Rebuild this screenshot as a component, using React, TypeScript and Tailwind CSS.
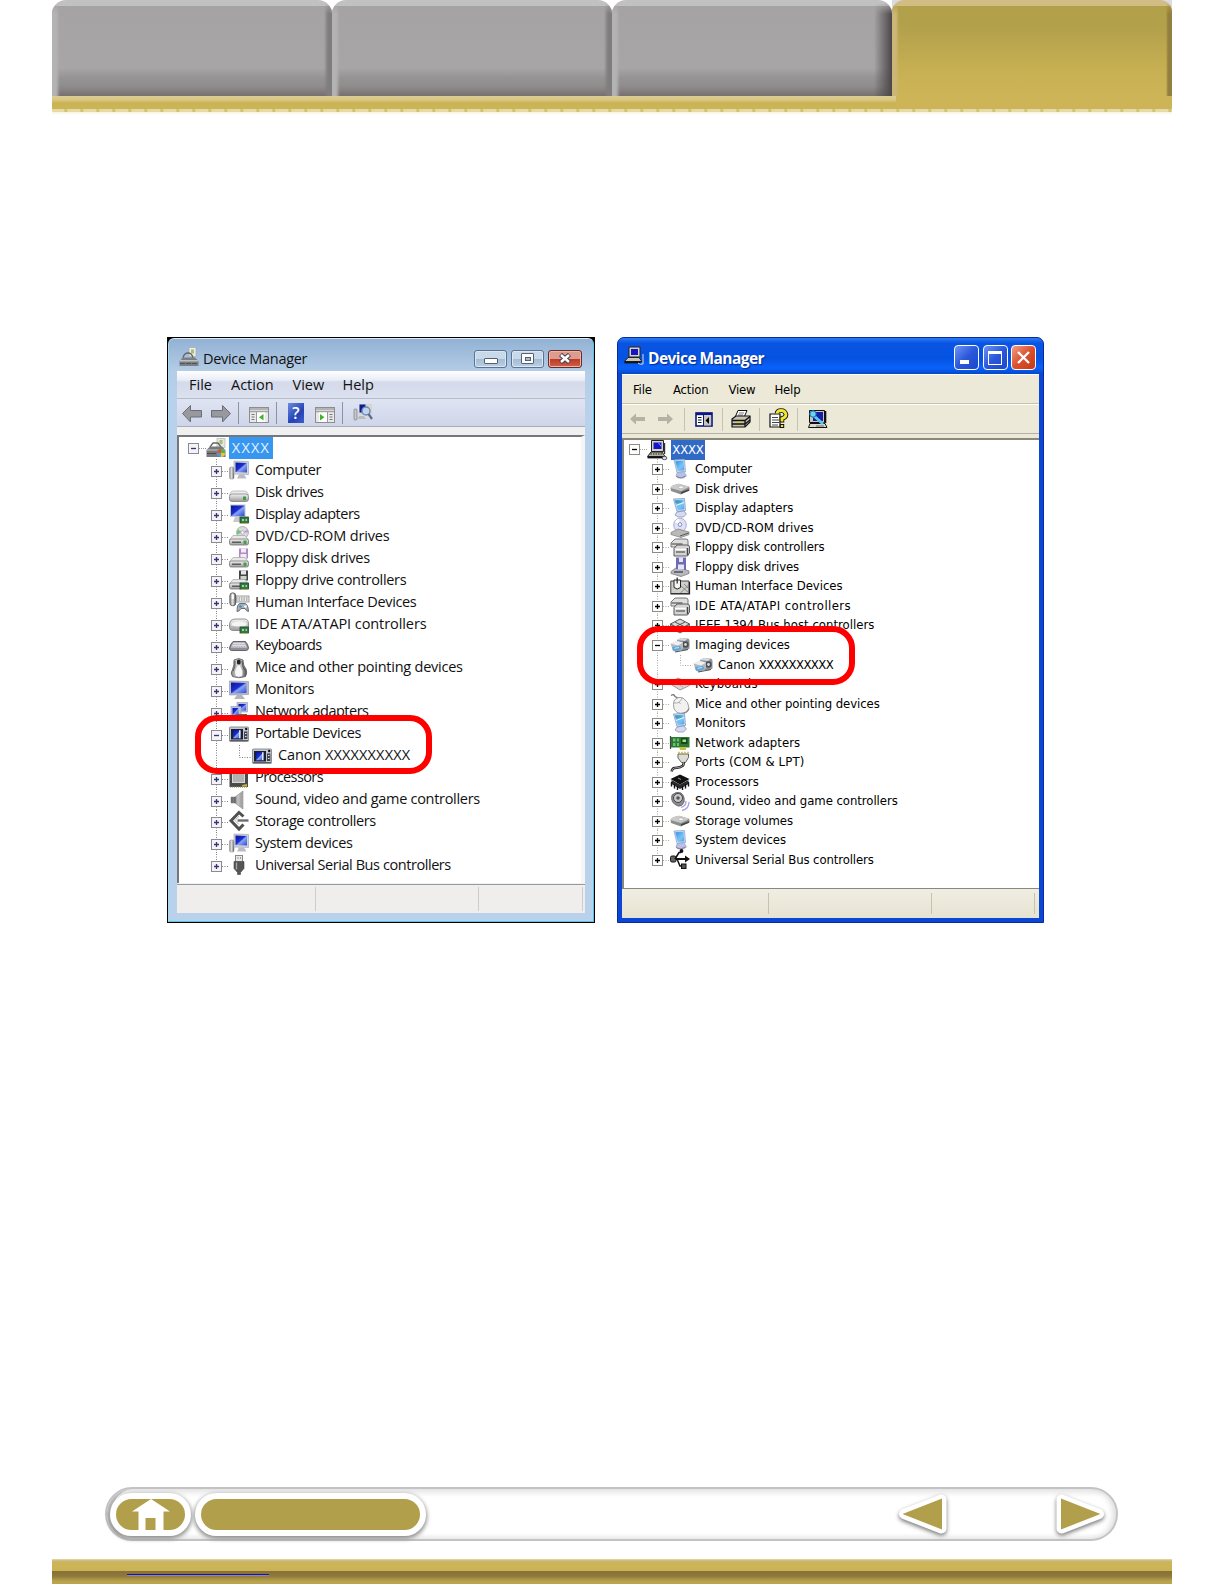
import React from "react";

type Row = { label: string; icon: React.ReactNode; track?: string; open?: boolean; child?: boolean };

const Icon = ({ children, size = 20 }: { children: React.ReactNode; size?: number }) => (
  <svg width={size} height={size} viewBox="0 0 20 20" className="shrink-0 overflow-visible">
    {children}
  </svg>
);

/* ---------- shared gradients ---------- */

const Defs = () => (
  <svg width="0" height="0" className="absolute">
    <defs>
      <linearGradient id="screen" x1="0" y1="0" x2="1" y2="1">
        <stop offset="0" stopColor="#0614a0" />
        <stop offset="0.45" stopColor="#1c2fd0" />
        <stop offset="0.55" stopColor="#8aa4f2" />
        <stop offset="1" stopColor="#2a46d8" />
      </linearGradient>
      <linearGradient id="metal" x1="0" y1="0" x2="0" y2="1">
        <stop offset="0" stopColor="#f2f2f2" />
        <stop offset="1" stopColor="#9c9c9c" />
      </linearGradient>
      <linearGradient id="steel" x1="0" y1="0" x2="1" y2="0">
        <stop offset="0" stopColor="#8a8a8a" />
        <stop offset="0.5" stopColor="#e6e6e6" />
        <stop offset="1" stopColor="#4c4c4c" />
      </linearGradient>
      <linearGradient id="cone" x1="0" y1="0" x2="1" y2="0">
        <stop offset="0" stopColor="#5a5a5a" />
        <stop offset="0.6" stopColor="#c4c4c4" />
        <stop offset="1" stopColor="#8a8a8a" />
      </linearGradient>
      <linearGradient id="sky" x1="0" y1="0" x2="1" y2="1">
        <stop offset="0" stopColor="#2f8fe0" />
        <stop offset="0.6" stopColor="#7cc4f6" />
        <stop offset="1" stopColor="#4aa0e8" />
      </linearGradient>
    </defs>
  </svg>
);

/* ---------- Vista icons ---------- */

const Chip = () => (
  <>
    <rect x="11" y="13" width="8.5" height="6" fill="#2c7a45" stroke="#1d4a2c" strokeWidth="0.8" />
    <path d="M13 15h2v2h-2zM16.5 15h1.5v2h-1.5z" fill="#9fd0a6" />
    <path d="M12 19.3h7" stroke="#c9b04a" strokeWidth="0.8" />
  </>
);

const DriveBody = ({ led = true }: { led?: boolean }) => (
  <>
    <path d="M0.5 14L4 9.5h12l3.5 4.5z" fill="#e8e8e8" stroke="#a5a5a5" strokeWidth="0.7" />
    <rect x="0.5" y="13" width="19" height="6" rx="1.8" fill="url(#metal)" stroke="#777" strokeWidth="0.8" />
    <path d="M3 16.2h9" stroke="#444" strokeWidth="1.2" />
    {led && <rect x="14.5" y="14.5" width="3" height="3.4" fill="#3fa043" />}
  </>
);

const vPc = (
  <Icon>
    <rect x="0.5" y="7" width="4.5" height="12" rx="1.5" fill="url(#steel)" stroke="#999" strokeWidth="0.6" />
    <path d="M5 1l14.5.5v13L5 14z" fill="#cfd2d8" stroke="#a4a9b2" strokeWidth="0.7" />
    <path d="M6.500 2.500l11.500.4v9.700l-11.500-.6z" fill="url(#screen)" />
    <path d="M10 14.500h5l2.500 4H8z" fill="#b8bcc2" />
  </Icon>
);
const vDisk = (
  <Icon>
    <path d="M0.8 13.500Q1 9 5 9h10q4 0 4.200 4.500z" fill="#ededed" stroke="#aaa" strokeWidth="0.7" />
    <rect x="0.5" y="12" width="19" height="7.500" rx="2.500" fill="url(#metal)" stroke="#858585" strokeWidth="0.8" />
    <rect x="14" y="14.500" width="3" height="3.600" fill="#3fa043" />
  </Icon>
);
const vDisplay = (
  <Icon>
    <rect x="1" y="0.5" width="15.500" height="12.500" fill="#c4c8d0" />
    <rect x="2" y="1.500" width="13.500" height="10.500" fill="url(#screen)" />
    <path d="M6 13h5v5H4z" fill="#c9c9c9" />
    <Chip />
  </Icon>
);
const vDvd = (
  <Icon>
    <circle cx="13.5" cy="6.500" r="6" fill="#d9d9de" stroke="#a5a5a5" strokeWidth="0.8" />
    <path d="M13.500 6.500L9 3.500a6 6 0 0 0-1 5z" fill="#76c47a" />
    <path d="M13.500 6.500l5-3a6 6 0 0 1 1 3z" fill="#c59ad0" />
    <circle cx="13.500" cy="6.500" r="1.600" fill="#fff" stroke="#999" strokeWidth="0.6" />
    <DriveBody />
  </Icon>
);
const vFloppy = (
  <Icon>
    <rect x="10" y="0.5" width="9" height="10" fill="#b08cc4" />
    <rect x="12" y="0.5" width="5" height="4" fill="#f3ecf6" />
    <rect x="11.500" y="6" width="6" height="4.500" fill="#f3ecf6" />
    <DriveBody />
  </Icon>
);
const vFloppyCtl = (
  <Icon>
    <rect x="10" y="0.5" width="9" height="10" fill="#444" />
    <rect x="12" y="0.5" width="5" height="4" fill="#e6e6e6" />
    <rect x="11.500" y="6" width="6" height="3.500" fill="#d0d0d0" />
    <DriveBody led={false} />
    <Chip />
  </Icon>
);
const vHid = (
  <Icon>
    <rect x="6" y="4" width="14" height="6" fill="#e8e8e8" stroke="#8c8c8c" strokeWidth="0.8" />
    <path d="M7 6h12M7 8h12" stroke="#8c8c8c" strokeWidth="1" strokeDasharray="1.5 1" />
    <rect x="0.8" y="0.8" width="6" height="13" rx="3" fill="url(#steel)" stroke="#555" strokeWidth="0.8" />
    <rect x="2.800" y="2.500" width="2" height="4.500" fill="#fff" />
    <path d="M8 19.500q0-7.500 3-8h5q3 .5 3.500 8-2 0-3.500-3h-4q-1.500 3-4 3z" fill="#a9b2bb" stroke="#59636c" strokeWidth="0.9" />
    <circle cx="11.500" cy="14.500" r="1.300" fill="#3b93b8" />
    <circle cx="16.500" cy="14.500" r="1.300" fill="#fff" />
  </Icon>
);
const vIde = (
  <Icon>
    <path d="M0.500 11q0-6 6-6h9q4 0 4 5v4q-1 2.500-4 2.500H4q-3.500 0-3.500-3z" fill="url(#metal)" stroke="#888" strokeWidth="0.9" />
    <path d="M2.500 9q7.500-3.500 15 0v2.500q-7 2-15 0z" fill="#f4f4f4" />
    <Chip />
  </Icon>
);
const vKeyboard = (
  <Icon>
    <path d="M4 5.500h12.500q3 3.500 3 6.500-.5 2.500-2 2.500h-15q-2 0-2-2.500Q1 8.500 4 5.500z" fill="#8f9096" stroke="#5c5c60" strokeWidth="0.9" />
    <path d="M4.500 6.500h11l2.500 5H2z" fill="#dcdde2" />
    <path d="M4 8.500h12M3 10.500h14" stroke="#a5a6ad" strokeWidth="0.7" strokeDasharray="1.500 .8" />
  </Icon>
);
const vMouse = (
  <Icon>
    <path d="M5 2q5-3 9 0 0 6 3 9 1.500 4-.5 7.500-6.500 2.500-13 0-2.500-3.500 0-7Q5.500 7 5 2z" fill="url(#steel)" stroke="#555" strokeWidth="0.8" />
    <path d="M10 7q5 6 3 11H7q-3-5 3-11z" fill="#f7f7f7" />
    <rect x="8" y="1.500" width="3.600" height="5" rx="1.500" fill="#222" />
    <path d="M6 3q.5 6-2 10M13 3q.5 6 2.500 9" stroke="#555" fill="none" />
  </Icon>
);
const vMonitor = (
  <Icon>
    <path d="M0.500 1l19 .5v13l-19 .5z" fill="#b9bcc4" stroke="#989ca6" strokeWidth="0.7" />
    <path d="M2 2.500l15.500.4v10l-15.500.6z" fill="url(#screen)" />
    <path d="M8 15h5l3 4H5z" fill="#b4b6ba" />
  </Icon>
);
const vNetwork = (
  <Icon>
    <rect x="8" y="0.500" width="10.500" height="9.500" fill="#b8bfd6" stroke="#8f98b8" strokeWidth="0.6" />
    <rect x="9.500" y="2" width="7.500" height="6.500" fill="url(#screen)" />
    <rect x="2" y="4.500" width="10" height="10" fill="#b9c3dc" stroke="#8f98b8" strokeWidth="0.6" />
    <rect x="3.500" y="6" width="6" height="7" fill="url(#screen)" />
    <rect x="9" y="12" width="9" height="5" fill="#3c7c50" />
  </Icon>
);
const vPortable = (
  <Icon>
    <rect x="0.500" y="3" width="19" height="14.500" rx="0.800" fill="#c6c8cf" stroke="#85878f" strokeWidth="0.9" />
    <rect x="2" y="5" width="12" height="10.500" fill="#1d1f33" />
    <rect x="4" y="6.300" width="7.500" height="8" fill="url(#screen)" />
    <path d="M10 6.300h1.500v8H10z" fill="#dfe6fa" />
    <rect x="15" y="7.500" width="3.400" height="7.500" fill="#44464f" />
    <circle cx="17.200" cy="5" r="1.200" fill="#111" />
    <path d="M16 9.500h1.500M16 12.500h1.500" stroke="#e5e5e5" />
    <path d="M1 16.500h18" stroke="#5c5e66" />
  </Icon>
);
const vCpu = (
  <Icon>
    <rect x="0.500" y="0.500" width="18.500" height="18.500" fill="#4a4a48" />
    <rect x="3.500" y="2" width="12" height="12.500" fill="#b2b2b2" stroke="#d8d8d8" />
    <path d="M1 18.800h17.500" stroke="#77704c" strokeWidth="1.400" strokeDasharray="1 1" />
    <path d="M13 17l5-1v2.500h-5z" fill="#c8b23c" />
  </Icon>
);
const vSound = (
  <Icon>
    <path d="M2 7h4l8-6v18l-8-6H2z" fill="url(#cone)" stroke="#8a8a8a" strokeWidth="0.6" />
    <path d="M6 7v6" stroke="#4a4a4a" />
    <path d="M12 2.500L14 1v18l-2-1.500z" fill="#a3a3a3" />
  </Icon>
);
const vStorage = (
  <Icon>
    <path d="M14.500 5.500L10 1.500 2 9.800l8 8.200 4.500-4.500" fill="none" stroke="#505052" strokeWidth="3" />
    <path d="M8.500 9.500h11" stroke="#6e6e70" strokeWidth="2.400" />
    <path d="M10 5L6 9.500l4 4" fill="none" stroke="#b5b5b5" strokeWidth="1" />
  </Icon>
);
const vUsb = (
  <Icon>
    <rect x="6.500" y="0.500" width="7" height="6.500" fill="#e8e8e8" stroke="#888" />
    <path d="M8.500 3h1M11 3h1" stroke="#555" />
    <path d="M5 6.500h10v7l-3.500 4v2h-3v-2l-3.500-4z" fill="#555" stroke="#444" strokeWidth="0.600" />
    <path d="M7.500 7.500v7" stroke="#a0a0a0" strokeWidth="1.400" />
  </Icon>
);
const vRoot = (
  <Icon>
    <path d="M11 0.500h8v9h-8z" fill="#e7e6df" stroke="#b4b4a8" strokeWidth="0.7" />
    <path d="M13.500 2h3v4h-3z" fill="#9fc07e" />
    <path d="M4 9l3-4h5l3 4" fill="none" stroke="#666" strokeWidth="1.300" />
    <path d="M0.500 12L4 8.500h12l3.500 3.500v7H0.500z" fill="#77797d" />
    <path d="M1 12h18" stroke="#c9cacc" />
    <path d="M1 15.500h9" stroke="#4a4c50" />
    <circle cx="15" cy="15" r="4" fill="#4a9be0" />
    <path d="M15 15V11a4 4 0 0 0-4 4z" fill="#e0522e" />
    <path d="M15 15h4a4 4 0 0 0-4-4z" fill="#5cb540" />
    <path d="M15 15v4a4 4 0 0 0 4-4z" fill="#f0c32c" />
  </Icon>
);
const vTitle = (
  <Icon>
    <path d="M10 0.500h7v9h-7z" fill="#ececdf" stroke="#aaa" strokeWidth="0.7" />
    <path d="M12 2.500h3v4h-3z" fill="#a9b98a" />
    <path d="M4 11q1-5 5-5t5 5" fill="none" stroke="#666" strokeWidth="1.300" />
    <path d="M0.500 14L4 10.500h12l3.500 3.500v5H0.500z" fill="#7b7f84" />
    <path d="M1 13.800h18" stroke="#cfd2d4" strokeWidth="1.200" />
    <path d="M1 16.500h18" stroke="#4f5358" strokeDasharray="5 1" />
  </Icon>
);

/* ---------- XP icons ---------- */

const xPc = (
  <Icon>
    <path d="M4 1L14.500 0.500l1 12-8.500 1z" fill="#c8dcf4" stroke="#8fa8cc" strokeWidth="0.800" />
    <path d="M5.300 2.300l8.200-.5.800 9.500-6.500.8z" fill="url(#sky)" />
    <path d="M7 14l7-1.500 2.500 4.500-3 2H8l-2-2z" fill="#b9c2e6" stroke="#9298b8" strokeWidth="0.600" />
    <path d="M6 17.500l5 1.500 4.500-2" stroke="#7c82a4" fill="none" />
  </Icon>
);
const xDisplay = (
  <Icon>
    <path d="M3.500 1L14.500 0.500l1 12-8.500 1z" fill="#c8dcf4" stroke="#7f9ac4" strokeWidth="0.800" />
    <path d="M4.800 2.300l8.700-.5.800 9.500-6.500.8z" fill="url(#sky)" />
    <path d="M6 7.500l8-3" stroke="#e6f5ff" strokeWidth="1.300" />
    <path d="M5.500 4h6" stroke="#3c9a72" />
    <path d="M7 14l7-1 2.500 3-3 3H8l-3-2z" fill="#d6daf0" stroke="#8388a8" strokeWidth="0.700" />
  </Icon>
);
const xDisk = (
  <Icon>
    <path d="M0.500 9Q1 7 4 6l5-1.200 10 3q1 1 .5 3.500L11 15.500 1 12z" fill="#8d8d8d" />
    <path d="M0.500 9Q1 7 4 6l5-1.200 10.500 3L11 12z" fill="#cbcbcb" />
    <ellipse cx="11" cy="8.300" rx="2.600" ry="1.500" fill="#f5f5f5" stroke="#999" strokeWidth="0.500" />
    <path d="M11 14l8-3" stroke="#444" strokeWidth="1.600" />
  </Icon>
);
const xDvd = (
  <Icon>
    <ellipse cx="10" cy="7" rx="6.300" ry="6.800" fill="#dfe2f6" stroke="#a9aed0" />
    <path d="M10 7L5 4a6 6 0 0 1 4-3.500z" fill="#fff" />
    <circle cx="10" cy="6.500" r="1.800" fill="#fff" stroke="#7f86b8" />
    <path d="M1 14.500L8 11l11 3v2.500l-8 3-10-3z" fill="#b9b9b9" stroke="#848484" strokeWidth="0.800" />
    <path d="M10 18l8.500-3" stroke="#555" />
  </Icon>
);
const xCtl = (
  <Icon>
    <path d="M1 6L5 2h11q2 0 2 2v6H1z" fill="#dedede" stroke="#777" />
    <path d="M1.500 7h11" stroke="#555" strokeWidth="1.200" />
    <path d="M4 11.500L7 8h10q2.500 0 2.500 2v6l-2 3H4z" fill="#d4d4d4" stroke="#5b5b5b" />
    <path d="M5 12.500h11" stroke="#fff" strokeWidth="1.500" />
    <path d="M6 15h9" stroke="#666" strokeWidth="1.400" />
    <path d="M17.500 11v7" stroke="#444" strokeWidth="1.400" />
  </Icon>
);
const xFloppy = (
  <Icon>
    <path d="M1 14.500L7 10l12 4v2.500l-8 3-10-3z" fill="#b9b9b9" stroke="#7a7a84" strokeWidth="0.800" />
    <path d="M6 0.500l10 0v12.500L6 12z" fill="#6f6ab4" />
    <path d="M9 0.500h4V5H9zM8 7.500h6v5H8z" fill="#e4e4f4" />
    <path d="M4 15h9" stroke="#444a68" strokeWidth="1.400" />
  </Icon>
);
const xHid = (
  <Icon>
    <path d="M0.800 5h18.200v12.500H0.800z" fill="#cfcfc9" stroke="#444" />
    <path d="M10 9l9 8M18.500 9l-8 8M14 8l5 5" stroke="#888" />
    <path d="M4 4h6.500v7.500q-3.200 3-6.500 0z" fill="#f6f6f2" stroke="#222" />
    <path d="M7.200 1.500v6" stroke="#222" strokeWidth="1.200" />
    <path d="M0.500 18h19V6" stroke="#222" fill="none" strokeWidth="1.200" />
  </Icon>
);
const xIeee = (
  <Icon>
    <path d="M0.500 9L10 4l9.500 5-9.500 5.500z" fill="#dadada" stroke="#555" />
    <path d="M0.500 9v4l9.500 5 9.500-5V9L10 14.500z" fill="#9d9d9d" stroke="#555" strokeWidth="0.8" />
    <path d="M5 7l10 5M15 7L5 12" stroke="#555" />
  </Icon>
);
const xCamera = (
  <Icon>
    <path d="M7 5l4-2 7 .5q1.500.5 1.500 3v7l-4 2-7-1z" fill="#8d9196" />
    <path d="M7 5l4-2 7 .5-3 2.500z" fill="#d6d9dc" />
    <circle cx="15.500" cy="9.500" r="3.200" fill="#4d5054" />
    <circle cx="15.500" cy="9.500" r="1.400" fill="#d4dade" />
    <path d="M0.500 8.500L7 6l6 1.500v6L8 17l-5-1z" fill="#b4bac0" />
    <path d="M0.500 8.500L7 6l6 1.500-5 3z" fill="#eef1f3" />
    <path d="M2 12l8-1 1.500 3-5.500 2-3-.5z" fill="#62a6d8" />
    <path d="M4.500 13.300l4.500-.8" stroke="#cfe6f6" />
    <path d="M5 17l8-1.500 5-1" fill="none" stroke="#55585c" strokeWidth="1.200" />
  </Icon>
);
const xKeyboard = (
  <Icon>
    <path d="M0.500 8L8 4l11.500 5v2.500L10 16 .500 10z" fill="#dcd6d8" stroke="#8a7f84" strokeWidth="0.8" />
    <path d="M3 8l10 5M6 6.500l10 4.500" stroke="#a89ca0" strokeDasharray="1.500 1" />
  </Icon>
);
const xMouse = (
  <Icon>
    <path d="M1 1.500q3-2 4 1l4 2" fill="none" stroke="#777" strokeWidth="1.300" />
    <path d="M4 7q3-5 9-3 6 4 6 10-1 5-7 5.500-6 0-8-5-1-4 0-7.500z" fill="#f1f1ef" stroke="#9e9e9e" />
    <path d="M4 9q6 1 8-5M9 8l1.500 2" fill="none" stroke="#b0b0b0" />
    <path d="M9 19.500q8 .5 10-5" fill="none" stroke="#888" strokeWidth="1.300" />
  </Icon>
);
const xNetwork = (
  <Icon>
    <path d="M0.500 4h19v10.500H0.500z" fill="#2e7a34" />
    <path d="M0.500 3v13" stroke="#444" strokeWidth="1.200" />
    <path d="M3 5.500h2.500v3H3zM7 5.500h2v3H7zM3 10h2.500v3H3zM7 10h2v3H7z" fill="#6cc06c" />
    <path d="M11 5h6.500v6H11z" fill="#164a1c" />
    <path d="M12.500 6.500h3.500v2.500h-3.500z" fill="#a6e08e" />
    <path d="M9 14h7v3h-6z" fill="#c9c040" />
  </Icon>
);
const xPorts = (
  <Icon>
    <path d="M8 0.500h11" stroke="#d8c84c" strokeWidth="1.600" strokeDasharray="2 1" />
    <path d="M8 2h10.500v3.500l-3 5h-4L8 6z" fill="#dcdcd4" stroke="#666" />
    <path d="M13.500 10q1 4-3 5t-6 1-3 3.500" fill="none" stroke="#222" strokeWidth="2.400" />
    <path d="M13.500 10q1 4-3 5t-6 1-3 3.500" fill="none" stroke="#ccc" strokeWidth="0.700" />
  </Icon>
);
const xCpu = (
  <Icon>
    <path d="M0.500 7L10 2.500 19.500 7 10 12.500z" fill="#111" />
    <path d="M1.500 8v4L10 17l8.500-5V8L10 12.500z" fill="#2a2a2a" />
    <path d="M1.500 10v4.500M4.500 12v4.500M7.500 14v4M12.500 14v4M15.500 12v4.500M18.500 10v4.500" stroke="#111" strokeWidth="1.400" />
    <path d="M8 6l3 1.500" stroke="#999" />
  </Icon>
);
const xSound = (
  <Icon>
    <path d="M2 4q4-4 9-2 4 3 3 9-2 5-6 4Q0 12 2 4z" fill="#8c8c90" stroke="#6b6b6f" />
    <circle cx="8" cy="7" r="4.500" fill="#c8c8cc" stroke="#444" />
    <circle cx="8" cy="7" r="1.800" fill="#555" />
    <path d="M16 10q0 5-5 6.500M19 11q0 7-7 8.500" fill="none" stroke="#a9a4dc" strokeWidth="1.300" />
  </Icon>
);
const xUsb = (
  <Icon>
    <path d="M1 9h17" stroke="#111" strokeWidth="2" />
    <path d="M15 5.500l5 3.500-5 3.500z" fill="#111" />
    <rect x="0.500" y="6" width="5.500" height="6" rx="1.500" fill="#666" stroke="#111" />
    <path d="M5 9l4-6.500h2M7 9l3 7h3" fill="none" stroke="#111" strokeWidth="1.500" />
    <circle cx="11.500" cy="1" r="1.900" fill="#111" />
    <rect x="11.500" y="14" width="4.500" height="4.500" fill="#555" stroke="#111" />
  </Icon>
);
const xRoot = (
  <Icon>
    <path d="M4.500 0.500h12v11h-12z" fill="#d6d3c8" stroke="#222" />
    <path d="M6.500 2.500h8v6.500h-8z" fill="#1414c8" />
    <path d="M11.500 3l2.500 3" stroke="#8fa8ff" />
    <path d="M4 12h11l3 4.500H0.500z" fill="#b5b2a8" stroke="#222" />
    <path d="M3.500 14h12" stroke="#222" strokeDasharray="1.500 1" />
    <path d="M0.500 17.500h16" stroke="#111" strokeWidth="1.800" />
    <path d="M17.500 3v11" stroke="#333" strokeWidth="1.400" />
    <ellipse cx="17.500" cy="18" rx="2.400" ry="1.700" fill="#ddd" stroke="#333" strokeWidth="0.800" />
  </Icon>
);

/* ---------- device lists ---------- */

const vistaRows: Row[] = [
  { label: "Computer", icon: vPc, track: "tracking-[-0.25px]" },
  { label: "Disk drives", icon: vDisk, track: "tracking-[-0.42px]" },
  { label: "Display adapters", icon: vDisplay, track: "tracking-[-0.5px]" },
  { label: "DVD/CD-ROM drives", icon: vDvd },
  { label: "Floppy disk drives", icon: vFloppy, track: "tracking-[-0.3px]" },
  { label: "Floppy drive controllers", icon: vFloppyCtl, track: "tracking-[-0.32px]" },
  { label: "Human Interface Devices", icon: vHid, track: "tracking-[-0.34px]" },
  { label: "IDE ATA/ATAPI controllers", icon: vIde, track: "tracking-[-0.08px]" },
  { label: "Keyboards", icon: vKeyboard, track: "tracking-[-0.55px]" },
  { label: "Mice and other pointing devices", icon: vMouse, track: "tracking-[-0.24px]" },
  { label: "Monitors", icon: vMonitor, track: "tracking-[-0.25px]" },
  { label: "Network adapters", icon: vNetwork, track: "tracking-[-0.5px]" },
  { label: "Portable Devices", icon: vPortable, open: true, track: "tracking-[-0.42px]" },
  { label: "Canon", icon: vPortable, child: true },
  { label: "Processors", icon: vCpu, track: "tracking-[-0.58px]" },
  { label: "Sound, video and game controllers", icon: vSound, track: "tracking-[-0.3px]" },
  { label: "Storage controllers", icon: vStorage, track: "tracking-[-0.39px]" },
  { label: "System devices", icon: vPc, track: "tracking-[-0.36px]" },
  { label: "Universal Serial Bus controllers", icon: vUsb, track: "tracking-[-0.43px]" },
];

const xpRows: Row[] = [
  { label: "Computer", icon: xPc },
  { label: "Disk drives", icon: xDisk },
  { label: "Display adapters", icon: xDisplay, track: "tracking-[-0.02px]" },
  { label: "DVD/CD-ROM drives", icon: xDvd, track: "tracking-[0.04px]" },
  { label: "Floppy disk controllers", icon: xCtl, track: "tracking-[-0.1px]" },
  { label: "Floppy disk drives", icon: xFloppy, track: "tracking-[-0.08px]" },
  { label: "Human Interface Devices", icon: xHid, track: "tracking-[-0.02px]" },
  { label: "IDE ATA/ATAPI controllers", icon: xCtl, track: "tracking-[0.41px]" },
  { label: "IEEE 1394 Bus host controllers", icon: xIeee, track: "tracking-[0.02px]" },
  { label: "Imaging devices", icon: xCamera, open: true, track: "tracking-[-0.06px]" },
  { label: "Canon", icon: xCamera, child: true, track: "tracking-[-0.1px]" },
  { label: "Keyboards", icon: xKeyboard, track: "tracking-[0.2px]" },
  { label: "Mice and other pointing devices", icon: xMouse, track: "tracking-[-0.09px]" },
  { label: "Monitors", icon: xDisplay, track: "tracking-[0.02px]" },
  { label: "Network adapters", icon: xNetwork, track: "tracking-[0.05px]" },
  { label: "Ports (COM & LPT)", icon: xPorts, track: "tracking-[0.16px]" },
  { label: "Processors", icon: xCpu, track: "tracking-[0.17px]" },
  { label: "Sound, video and game controllers", icon: xSound, track: "tracking-[-0.05px]" },
  { label: "Storage volumes", icon: xDisk, track: "tracking-[-0.06px]" },
  { label: "System devices", icon: xPc, track: "tracking-[-0.06px]" },
  { label: "Universal Serial Bus controllers", icon: xUsb, track: "tracking-[-0.11px]" },
];

const Expander = ({ open, xp }: { open?: boolean; xp?: boolean }) => (
  <svg width="11" height="11" viewBox="0 0 11 11" className="shrink-0">
    <rect x="0.5" y="0.5" width="10" height="10" fill={xp ? "#fff" : "#f4f4f6"} stroke={xp ? "#8c8c84" : "#8a8a90"} />
    <path d={open ? "M3 5.5h5" : "M3 5.500h5M5.500 3v5"} stroke={xp ? "#000" : "#34347c"} strokeWidth="1.3" />
  </svg>
);

// dotted guide lines with the +/- box sitting on them
const Gutter = ({ row, xp, last, h }: { row: Row; xp?: boolean; last: boolean; h: number }) => {
  const dot = xp ? "#a8a8a8" : "#808080";
  const mid = h / 2 + (xp ? 0.5 : 1.5);
  return (
    <svg width={row.child ? 41 : 18} height={h} className="shrink-0 overflow-visible">
      <path d={`M5.500 0V${last ? mid : h}`} stroke={dot} strokeDasharray="1 1.500" />
      {row.child ? (
        <path d={`M28.500 0V${mid}H40`} stroke={dot} strokeDasharray="1 1.500" fill="none" />
      ) : (
        <g>
          <path d={`M11 ${mid}H18`} stroke={dot} strokeDasharray="1 1.500" />
          <g transform={`translate(0 ${Math.round(mid - 5.5)})`}>
            <Expander open={row.open} xp={xp} />
          </g>
        </g>
      )}
    </svg>
  );
};

/* ---------- Vista window ---------- */

const VistaWindow = () => (
  <section className="relative w-[428px] h-[586px] bg-black p-px font-['Open_Sans','Noto_Sans',sans-serif] text-[#111]">
    <div className="h-full rounded-t-[6px] border border-[#58c4e2] border-t-[#dcebf8] border-l-[#9fdcf0] bg-[linear-gradient(#92b2d4_0px,#b4cce6_32px,#b9d1ea_60px)] px-[8px]">
      <div className="flex h-[32px] items-center pt-[7px]">
        <span className="ml-[2px] mb-[4px]">{vTitle}</span>
        <span className="ml-[4px] text-[14.5px] tracking-[-0.3px]">Device Manager</span>
        <div className="ml-auto mr-[3px] flex gap-1">
          <span className="flex h-[18px] w-[33px] items-center justify-center rounded-[3px] border border-[#5b7390] bg-[linear-gradient(#c8d9ea_50%,#a3bbd4_50%,#b9d0e6)] shadow-[inset_0_0_0_1px_#dbe8f4]">
            <i className="mt-1 h-[6px] w-[14px] rounded-[1px] border border-[#56606e] bg-white" />
          </span>
          <span className="flex h-[18px] w-[33px] items-center justify-center rounded-[3px] border border-[#5b7390] bg-[linear-gradient(#c8d9ea_50%,#a3bbd4_50%,#b9d0e6)] shadow-[inset_0_0_0_1px_#dbe8f4]">
            <i className="flex h-[11px] w-[13px] items-center justify-center rounded-[1px] border border-[#56606e] bg-white">
              <b className="h-[4px] w-[6px] border border-[#56606e] bg-[#a3bbd4]" />
            </i>
          </span>
          <span className="flex h-[18px] w-[34px] items-center justify-center rounded-[3px] border border-[#6b2a25] bg-[linear-gradient(#dd9c90_50%,#bb3a26_50%,#d0604a)] shadow-[inset_0_0_0_1px_#e8b8ae]">
            <svg width="14" height="11" viewBox="0 0 14 11">
              <path d="M2.500 1.500l9 8M11.500 1.500l-9 8" stroke="#4d4048" strokeWidth="4.500" />
              <path d="M3 2l8 7M11 2l-8 7" stroke="#fff" strokeWidth="2.500" />
            </svg>
          </span>
        </div>
      </div>

      <div className="h-[542px] bg-[#f0f0f0]">
        <div className="flex h-[28px] items-center bg-[linear-gradient(#fff_0px,#e9edf6_9px,#d4daea_11px,#dce1f0)] text-[14.5px] border-b border-[#b8bcc8]">
          <span className="ml-[12px] w-[42px]">File</span>
          <span className="w-[61.5px]">Action</span>
          <span className="w-[50px]">View</span>
          <span>Help</span>
        </div>
        <div className="flex h-[28px] items-center border-b border-[#a9adb9] bg-[linear-gradient(#dfe4f3,#cfd6e9)]">
          <span className="ml-[5px] w-[29px] pt-px">
            <Icon><path d="M0.500 10.500l8-8v5h11v6.500h-11v5z" fill="#97999e" stroke="#6c6e74" /></Icon>
          </span>
          <span className="w-[27px] pt-px">
            <Icon><path d="M19.500 10.500l-8-8v5H.5V14h11v5z" fill="#97999e" stroke="#6c6e74" /></Icon>
          </span>
          <i className="h-[22px] w-px bg-[#8e929c]" />
          <span className="ml-[10px] pt-[2px]">
            <Icon>
              <rect x="0.500" y="3.500" width="19" height="15" fill="#e9e9e9" stroke="#8d8d8d" />
              <path d="M1 5h18M1 7.500h18" stroke="#a3a3a3" strokeWidth="1.500" />
              <path d="M2.500 10.500h3M2.500 13h3M2.500 15.500h3" stroke="#777" />
              <path d="M7.500 8v10" stroke="#999" />
              <rect x="8" y="8.500" width="8" height="9.500" fill="#fff" />
              <path d="M14.500 10v6.500l-4.500-3.200z" fill="#45b02c" />
            </Icon>
          </span>
          <i className="ml-[7px] h-[22px] w-px bg-[#8e929c]" />
          <span className="ml-[11px] flex h-[20px] w-[16px] items-center justify-center bg-[linear-gradient(135deg,#6d8be0,#2443b4_60%,#3d5fce)] font-['Open_Sans',sans-serif] text-[16px] font-semibold text-white">?</span>
          <span className="ml-[11px] pt-[2px]">
            <Icon>
              <rect x="0.500" y="3.500" width="19" height="15" fill="#e9e9e9" stroke="#8d8d8d" />
              <path d="M1 5h18M1 7.500h18" stroke="#a3a3a3" strokeWidth="1.500" />
              <rect x="4" y="8.500" width="8" height="9.500" fill="#fff" />
              <path d="M5 10v6.500l4.500-3.200z" fill="#45b02c" />
              <path d="M12.500 8v10" stroke="#999" />
              <path d="M14.500 10.500h3M14.500 13h3M14.500 15.500h3" stroke="#777" />
            </Icon>
          </span>
          <i className="ml-[7px] h-[22px] w-px bg-[#8e929c]" />
          <span className="ml-[10px] pt-px">
            <Icon>
              <rect x="1" y="6" width="3" height="11" rx="1" fill="#c2c6c4" stroke="#7e8480" strokeWidth="0.700" />
              <rect x="6" y="1" width="13" height="11" fill="#d5d5cf" />
              <rect x="6.500" y="1.500" width="6" height="8" fill="#101c90" />
              <path d="M13 2h5v5h-3z" fill="#d9d6cc" />
              <circle cx="13" cy="8" r="4" fill="#bcd3f2" stroke="#7488b4" strokeWidth="1.400" />
              <path d="M15.500 11l3.500 5" stroke="#5e6c8c" strokeWidth="2.200" />
              <path d="M6 13h5l2 3H5z" fill="#bbb" />
            </Icon>
          </span>
        </div>
        <div className="h-[8px]" />
        <div className="h-[448px] border-l-2 border-t-2 border-[#74777b] border-r-4 border-r-[#f5f5f5] bg-white text-[14.5px] leading-none tracking-[-0.15px]">
          <div className="flex h-[22px] items-center pl-[9px]">
            <Expander open />
            <i className="h-px w-[7px] border-t border-dotted border-[#999]" />
            {vRoot}
            <span className="ml-[3px] flex h-[22px] w-[44px] items-center justify-center bg-[#3796f0] text-[#e6f2ff] tracking-[1.2px]">XXXX</span>
          </div>
          {vistaRows.map((row, i) => (
            <div key={row.label} className="flex h-[21.97px] items-center pl-[32px]">
              <Gutter row={row} last={i === vistaRows.length - 1} h={22} />
              {row.icon}
              <span className={`ml-[6px] whitespace-pre ${row.track ?? ""}`}>
                {row.label}
                {row.child && <span className="ml-[4px] tracking-[0.15px]">XXXXXXXXXX</span>}
              </span>
            </div>
          ))}
        </div>
        <div className="mt-px flex h-[29px] border-t border-[#9a9a9a] bg-[#f0eeed] py-[2px]">
          <i className="w-[139px] border-r border-[#cfcdcc]" />
          <i className="w-[163px] border-r border-[#cfcdcc]" />
          <i className="w-[104px] border-r border-[#cfcdcc]" />
        </div>
      </div>
    </div>
    <div className="absolute left-[28px] top-[378px] h-[59px] w-[237px] rounded-[22px] border-[6px] border-[#fe0000]" />
  </section>
);

/* ---------- XP window ---------- */

const XpWindow = () => (
  <section className="relative w-[427px] h-[586px] rounded-t-[7px] border border-[#0a2a9c] bg-[#0c46d6] px-[4px] font-['DejaVu_Sans_Condensed','DejaVu_Sans',sans-serif] text-black">
    <div className="-mx-[4px] flex h-[36px] items-center rounded-t-[6px] bg-[linear-gradient(#2a7cf5_0px,#0a54e4_5px,#0552e0_20px,#0a62fa_30px,#0348c8)] pl-[6px] pr-[7px]">
      <Icon>
        <path d="M5 1h11v10H5z" fill="#d6d3c8" stroke="#222" />
        <path d="M7 3h7v6H7z" fill="#1414c8" />
        <path d="M4 11.500h11l3 4H0.500z" fill="#c9c6bc" stroke="#222" />
        <path d="M0.500 16.500h16" stroke="#111" strokeWidth="1.600" />
        <path d="M14 17q2 2 5 1V8" stroke="#ddd" fill="none" />
      </Icon>
      <span className="ml-[4px] mt-[5px] font-['Open_Sans','Noto_Sans',sans-serif] text-[15.5px] font-bold tracking-[-0.55px] text-white [text-shadow:1px_1px_1px_#0a2a8c]">Device Manager</span>
      <div className="ml-auto mt-[3px] flex gap-[3.5px]">
        <span className="flex h-[25px] w-[25px] items-end rounded-[4px] border border-white bg-[linear-gradient(135deg,#6f95f4,#2b57da_50%,#1c48cc)] pb-[5px] pl-[5px]">
          <i className="h-[4px] w-[9px] bg-white" />
        </span>
        <span className="flex h-[25px] w-[25px] items-center justify-center rounded-[4px] border border-white bg-[linear-gradient(135deg,#6f95f4,#2b57da_50%,#1c48cc)]">
          <i className="h-[14px] w-[14px] border border-t-[3px] border-white" />
        </span>
        <span className="flex h-[25px] w-[25px] items-center justify-center rounded-[4px] border border-white bg-[linear-gradient(135deg,#f0a088,#dc4f2c_50%,#c43a18)]">
          <svg width="15" height="15" viewBox="0 0 15 15">
            <path d="M2 2l11 11M13 2L2 13" stroke="#fff" strokeWidth="2.400" />
          </svg>
        </span>
      </div>
    </div>

    <div className="h-[544px] bg-[#ece9d8]">
      <div className="flex h-[30px] items-center border-b border-[#c5c2b0] border-t border-t-white pt-[2px] text-[13px] tracking-[-0.2px]">
        <span className="ml-[11px] w-[40px]">File</span>
        <span className="w-[55.5px]">Action</span>
        <span className="w-[46px]">View</span>
        <span>Help</span>
      </div>
      <div className="flex h-[30px] items-center border-b border-[#b5b2a2] border-t border-t-white">
        <svg width="15" height="14" viewBox="0 0 15 14" className="ml-[8px]">
          <path d="M0 7l6-5.500V5h9v4H6v3.500z" fill="#b4b2a4" />
        </svg>
        <svg width="15" height="14" viewBox="0 0 15 14" className="ml-[13px]">
          <path d="M15 7L9 1.500V5H0v4h9v3.500z" fill="#b4b2a4" />
        </svg>
        <i className="ml-[11px] h-[23px] w-px bg-[#c5c2b0]" />
        <svg width="18" height="15" viewBox="0 0 18 15" className="ml-[10px]">
          <rect x="1" y="1" width="16" height="13" fill="#fff" stroke="#0a1880" strokeWidth="1.600" />
          <path d="M1 2h16" stroke="#0a1880" strokeWidth="2.400" />
          <path d="M8.500 2v12" stroke="#0a1880" />
          <rect x="9" y="3.500" width="7" height="10" fill="#c8c6bc" />
          <path d="M3 5.500h3.500M3 8h3.500M3 10.500h3.500" stroke="#111" strokeWidth="1.200" />
          <path d="M14 5v7l-3.500-3.500z" fill="#000" />
        </svg>
        <i className="ml-[9px] h-[23px] w-px bg-[#c5c2b0]" />
        <span className="ml-[8px]">
          <Icon>
            <path d="M7 1.500h9l-3 7H4z" fill="#fff" stroke="#111" />
            <path d="M8 4h5M7 6h5" stroke="#777" />
            <path d="M1 10l4-3h14v6l-5 5H1z" fill="#c6c3b4" stroke="#111" strokeWidth="1.200" />
            <path d="M1 11.500h13l5-4" fill="none" stroke="#111" strokeWidth="1.400" />
            <path d="M1 15h13l5-4M14 12v6" fill="none" stroke="#111" strokeWidth="1.300" />
            <path d="M6 13.300h5" stroke="#d8c832" strokeWidth="1.400" />
          </Icon>
        </span>
        <i className="ml-[8px] h-[23px] w-px bg-[#c5c2b0]" />
        <span className="ml-[9px]">
          <Icon>
            <path d="M1 5h10v13H1z" fill="#fff" stroke="#111" strokeWidth="1.200" />
            <path d="M3 8.500h6M3 11h7M3 13.500h7M3 16h6" stroke="#444" />
            <path d="M8 4.500Q8 1.500 12 1.500t5 4q0 3-4 4v4" fill="none" stroke="#111" strokeWidth="4.600" />
            <path d="M8 4.500Q8 1.500 12 1.500t5 4q0 3-4 4v3" fill="none" stroke="#f4e62a" strokeWidth="2.800" />
            <rect x="11.300" y="15.500" width="3.400" height="3" fill="#f4e62a" stroke="#111" />
          </Icon>
        </span>
        <i className="ml-[8px] h-[23px] w-px bg-[#c5c2b0]" />
        <span className="ml-[10px]">
          <Icon>
            <path d="M1.500 1.500h15v12h-15z" fill="#c9c6bc" stroke="#111" />
            <path d="M5 3h10v9H5z" fill="#1420a8" />
            <path d="M2 14.500h15l2 4H0.500z" fill="#dcdad0" stroke="#111" />
            <path d="M17.500 2v12" stroke="#111" strokeWidth="1.600" />
            <path d="M5 6l10 9" stroke="#5cc8f0" strokeWidth="3" />
            <circle cx="5" cy="5" r="3.200" fill="#6fd0f4" stroke="#1670a0" />
            <path d="M8 17h8" stroke="#666" />
          </Icon>
        </span>
      </div>
      <div className="h-[4px]" />
      <div className="h-[450px] border-l-2 border-t-2 border-[#8a887a] bg-white text-[13px] leading-none tracking-[-0.15px]">
        <div className="flex h-[19.600px] items-center pl-[5px]">
          <Expander open xp />
          <i className="h-px w-[7px] border-t border-dotted border-[#aaa]" />
          {xRoot}
          <span className="ml-[4px] flex h-[20px] w-[34px] items-center justify-center bg-[#316ac5] text-white">XXXX</span>
        </div>
        {xpRows.map((row, i) => (
          <div key={row.label} className="flex h-[19.530px] items-center pl-[28px]">
            <Gutter row={row} last={i === xpRows.length - 1} h={20} xp />
            {row.icon}
            <span className={`ml-[5px] -mt-px whitespace-pre ${row.track ?? ""}`}>
              {row.label}
              {row.child && <span className="ml-[4px] tracking-[-0.58px]">XXXXXXXXXX</span>}
            </span>
          </div>
        ))}
      </div>
      <div className="flex h-[30px] border-t border-[#8a887a] bg-[linear-gradient(#f0eee2,#e6e3d2)] py-[4px]">
        <i className="w-[147px] border-r border-[#c5c2b0]" />
        <i className="w-[163px] border-r border-[#c5c2b0]" />
        <i className="w-[103px] border-r border-[#c5c2b0]" />
      </div>
    </div>
    <div className="absolute left-[19px] top-[288px] h-[59px] w-[218px] rounded-[22px] border-[6px] border-[#fe0000]" />
  </section>
);

/* ---------- page chrome ---------- */

const GreyTab = ({ dark }: { dark?: boolean }) => (
  <div className="h-[96px] w-[280px] overflow-hidden rounded-t-[14px] bg-[linear-gradient(#c2c1c1_0px,#c2c1c1_6px,#a5a3a4_6px,#a7a5a6_68px,#969394_78px,#908d8e_86px,#786f70_96px)]">
    <div
      className={
        dark
          ? "h-full bg-[linear-gradient(90deg,#b4b3b3_0px,#b4b3b3_4px,transparent_8px,transparent_262px,#4c4648_280px)] [mask-image:linear-gradient(transparent_3px,#000_14px)]"
          : "h-full bg-[linear-gradient(90deg,#b4b3b3_0px,#b4b3b3_4px,transparent_8px,transparent_272px,#7f7d7e_276px,#7f7d7e_280px)] [mask-image:linear-gradient(transparent_3px,#000_14px)]"
      }
    />
  </div>
);

const Header = () => (
  <header className="px-[52px]">
    <div className="flex h-[96px]">
      <GreyTab />
      <GreyTab />
      <GreyTab dark />
      <div className="bg-[#dcdae0]">
        <div className="h-[96px] w-[280px] overflow-hidden rounded-t-[12px] bg-[linear-gradient(#d1bc83_0px,#d1bc83_6px,#b29f49_6px,#b4a14c_30px,#c7b053_70px,#cdb456_96px)]">
          <div className="h-full bg-[linear-gradient(90deg,#cbb676_0px,#cbb676_4px,transparent_7px,transparent_274px,#93803e_276px,#93803e_280px)] [mask-image:linear-gradient(transparent_3px,#000_14px)]" />
        </div>
      </div>
    </div>
    <div className="flex h-[13px]">
      <div className="w-[844px] bg-[linear-gradient(#ddcd92_0px,#d8c684_4px,#c9b353_7px,#cbb557_13px)]" />
      <div className="flex-1 bg-[linear-gradient(#cdb456_0px,#cbb557_13px)]" />
    </div>
    <div className="h-[3px] bg-[repeating-linear-gradient(90deg,#e6daa6_0px,#e6daa6_12px,#cfbd6a_13px,#cfbd6a_14px,#e6daa6_16px)]" />
    <div className="h-[3px] bg-[linear-gradient(#f8f3de,#fff)]" />
  </header>
);

const Footer = () => (
  <footer>
    <div className="ml-[105px] flex h-[54px] w-[1013px] items-center rounded-full border-2 border-[#c3c3c3] bg-[linear-gradient(#e8e8e8,#fff_8px,#fff_44px,#efefef)] pl-[3px] shadow-[inset_-5px_0_7px_-3px_#d4d4d4,inset_5px_0_0_-1px_#c0c0c0]">
      <div className="flex h-[43px] w-[81px] items-center justify-center rounded-full border-[6px] border-white bg-[#b29f4b] shadow-[0_2px_4px_1px_#909090]">
        <svg width="38" height="31" viewBox="0 0 38 31" className="shrink-0">
          <path d="M19 0L0 12.500h6.500V31H13.500V19H23.500V31H31.500V12.500H38z" fill="#fff" />
        </svg>
      </div>
      <div className="ml-[4px] h-[43px] w-[231px] rounded-full border-[6px] border-white bg-[#b29f4b] shadow-[0_2px_4px_1px_#909090]" />
      <svg width="54" height="50" viewBox="0 0 54 50" className="ml-[468px] overflow-visible drop-shadow-[0_2px_2px_#777]">
        <path d="M10 25L47.500 10.500v29z" fill="#b29f4b" stroke="#fff" strokeWidth="10" strokeLinejoin="round" />
        <path d="M8.500 25L48 9.500v31z" fill="#b29f4b" />
      </svg>
      <svg width="54" height="50" viewBox="0 0 54 50" className="ml-[107px] overflow-visible drop-shadow-[0_2px_2px_#777]">
        <path d="M44 25L6.500 10.500v29z" fill="#b29f4b" stroke="#fff" strokeWidth="10" strokeLinejoin="round" />
        <path d="M45.500 25L6 9.500v31z" fill="#b29f4b" />
      </svg>
    </div>
    <div className="mx-[52px] mt-[18px] h-[25px] bg-[linear-gradient(#e6dcae_0px,#c9b572_2px,#cdb456_5px,#cbb355_12px,#88713a_12px,#8e773a_17px,#b8a24c_22px,#bba54d_25px)] pl-[75px] pt-[15px]">
      <div className="h-[2px] w-[142px] border-b border-b-[#8d86a8] bg-[#1c1590]" />
    </div>
  </footer>
);

export default function App() {
  return (
    <div className="flex h-[1584px] w-[1224px] flex-col overflow-hidden bg-white">
      <Defs />
      <Header />
      <main className="flex flex-1 gap-[22px] pl-[167px] pt-[222px]">
        <VistaWindow />
        <XpWindow />
      </main>
      <Footer />
    </div>
  );
}
